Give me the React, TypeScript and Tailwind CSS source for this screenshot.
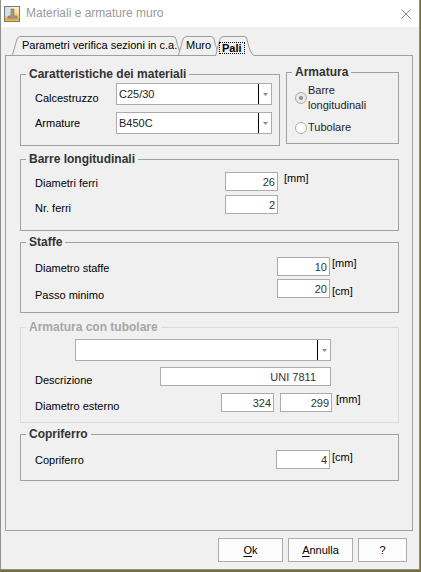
import React from "react";

const FONT = "font-['Liberation_Sans',Arial,sans-serif]";

function Legend({ children, disabled }: { children: React.ReactNode; disabled?: boolean }) {
  return (
    <legend
      className={`ml-[5px] whitespace-nowrap px-[3px] text-[12px] font-bold leading-[15px] ${
        disabled ? "text-[#a6a6a6]" : "text-[#333333]"
      }`}
    >
      {children}
    </legend>
  );
}

function Label({ children, className }: { children: React.ReactNode; className: string }) {
  return <div className={`shrink-0 whitespace-nowrap leading-[15px] text-black ${className}`}>{children}</div>;
}

function NumBox({ value, className }: { value: string; className: string }) {
  return (
    <div
      className={`h-[19px] shrink-0 border border-[#ababab] bg-white text-right leading-[18px] text-[#333333] ${className}`}
    >
      {value}
    </div>
  );
}

function Unit({ children, className }: { children: React.ReactNode; className: string }) {
  return <div className={`whitespace-nowrap leading-[15px] text-black ${className}`}>{children}</div>;
}

function Combo({ value, className }: { value: string; className: string }) {
  return (
    <div className={`flex h-[22px] shrink-0 border border-[#ababab] bg-white ${className}`}>
      <div className="flex-1 pl-[2px] pt-[3px] leading-[15px] text-[#222222]">{value}</div>
      <div className="flex w-[13px] items-center justify-center border-l border-black">
        <svg width="5" height="3" viewBox="0 0 5 3">
          <path d="M0 0H5L2.5 3Z" fill="#8a8a8a" />
        </svg>
      </div>
    </div>
  );
}

function Radio({ checked }: { checked?: boolean }) {
  return (
    <span
      className={`flex h-[12px] w-[12px] shrink-0 items-center justify-center rounded-full border border-[#adadad] ${
        checked ? "bg-[#e8e8e8]" : "bg-white"
      }`}
    >
      {checked && <span className="h-[4px] w-[4px] rounded-full bg-[#8c8c8c]" />}
    </span>
  );
}

function Tab({
  width,
  height,
  className,
  children,
  selected,
}: {
  width: number;
  height: number;
  className: string;
  children: React.ReactNode;
  selected?: boolean;
}) {
  const W = width;
  const H = height;
  const d = `M0.5 ${H} L5 3 Q6 0.5 9 0.5 L${W - 11} 0.5 Q${W - 8.5} 0.5 ${W - 8} 3 Q${W - 5} ${H - 1} ${W} ${H}`;
  return (
    <div className={`relative shrink-0 ${selected ? "z-20" : "z-10"} ${className}`}>
      <svg className="absolute left-0 top-0" width={W} height={H} viewBox={`0 0 ${W} ${H}`}>
        <path d={d} fill="#f0f0f0" stroke="#9c9c9c" strokeWidth="1" />
      </svg>
      <div className="relative whitespace-nowrap">{children}</div>
    </div>
  );
}

function TitleIcon() {
  return (
    <svg width="16" height="16" viewBox="0 0 16 16">
      <defs>
        <linearGradient id="ti" x1="0" y1="0" x2="0" y2="1">
          <stop offset="0" stopColor="#fdf6cf" />
          <stop offset="1" stopColor="#f1b748" />
        </linearGradient>
      </defs>
      <rect x="0.5" y="0.5" width="15" height="15" fill="url(#ti)" stroke="#7d7c74" />
      <rect x="1" y="1" width="5" height="9" fill="#cfe0ee" />
      <path d="M7 3H10V10H13V12H4V10H7Z" fill="#9a9a9a" stroke="#6e6e6e" strokeWidth="0.6" />
      <path d="M1 13H15" stroke="#c98a2c" />
    </svg>
  );
}

export default function App() {
  return (
    <div className={`h-[572px] w-[421px] bg-[#7a6a33] text-[11px] ${FONT}`}>
      <div className="flex h-[570px] w-[420px] flex-col border-x border-b border-[#8f8f8f] bg-[#f0f0f0]">
        {/* title bar */}
        <div className="flex h-[27px] shrink-0 items-center bg-white">
          <div className="ml-[3px]">
            <TitleIcon />
          </div>
          <div className="ml-[6px] flex-1 text-[12px] leading-[15px] text-[#9a9a9a]">Materiali e armature muro</div>
          <svg className="mr-[8px]" width="10" height="10" viewBox="0 0 10 10">
            <path d="M0.5 0.5L9.5 9.5M9.5 0.5L0.5 9.5" stroke="#8a8a8a" strokeWidth="1" />
          </svg>
        </div>

        {/* body */}
        <div className="flex flex-1 flex-col pl-[4px] pr-[6px] pt-[9px]">
          {/* tab strip */}
          <div className="flex h-[19px] pl-[7px]">
            <Tab width={172} height={19} className="w-[172px]">
              <div className="pl-[10px] pt-[2px] leading-[15px] text-black">Parametri verifica sezioni in c.a.</div>
            </Tab>
            <Tab width={44} height={19} className="-ml-[6px] w-[44px]">
              <div className="pl-[8px] pt-[2px] leading-[15px] text-black">Muro</div>
            </Tab>
            <Tab width={40} height={20} className="-ml-[7px] w-[40px]" selected>
              <div className="pl-[4px] pt-[4px]">
                <span className="inline-block border border-dotted border-black px-[2px] font-bold leading-[10px] text-black">
                  Pali
                </span>
              </div>
            </Tab>
          </div>

          {/* tab page */}
          <div className="h-[476px] border border-[#a0a0a0] pl-[14px] pt-[9px]">
            <div className="flex items-start">
              <fieldset className="mt-[2px] h-[79px] w-[260px] min-w-0 border border-[#a0a0a0]">
                <Legend>Caratteristiche dei materiali</Legend>
                <div className="mt-[1px] flex items-start pl-[14px]">
                  <Label className="mt-[8px] w-[81px]">Calcestruzzo</Label>
                  <Combo value="C25/30" className="w-[156px]" />
                </div>
                <div className="mt-[6px] flex items-start pl-[14px]">
                  <Label className="mt-[4px] w-[81px]">Armature</Label>
                  <Combo value="B450C" className="w-[156px]" />
                </div>
              </fieldset>

              <fieldset className="ml-[6px] h-[79px] w-[113px] min-w-0 border border-[#a0a0a0]">
                <Legend>Armatura</Legend>
                <div className="mt-[3px] flex items-start pl-[8px]">
                  <div className="mt-[9px]">
                    <Radio checked />
                  </div>
                  <div className="ml-[1px] leading-[15px] text-[#222222]">
                    Barre
                    <br />
                    longitudinali
                  </div>
                </div>
                <div className="mt-[7px] flex items-start pl-[8px]">
                  <div className="mt-[2px]">
                    <Radio />
                  </div>
                  <div className="ml-[1px] leading-[15px] text-[#222222]">Tubolare</div>
                </div>
              </fieldset>
            </div>

            <fieldset className="mt-[6px] h-[79px] w-[379px] min-w-0 border border-[#a0a0a0]">
              <Legend>Barre longitudinali</Legend>
              <div className="mt-[5px] flex items-start pl-[14px]">
                <Label className="mt-[4px] w-[190px]">Diametri ferri</Label>
                <NumBox value="26" className="w-[53px] pr-[2px]" />
                <Unit className="-mt-[1px] ml-[6px]">[mm]</Unit>
              </div>
              <div className="mt-[4px] flex items-start pl-[14px]">
                <Label className="mt-[6px] w-[190px]">Nr. ferri</Label>
                <NumBox value="2" className="w-[53px] pr-[2px]" />
              </div>
            </fieldset>

            <fieldset className="mt-[4px] h-[78px] w-[379px] min-w-0 border border-[#a0a0a0]">
              <Legend>Staffe</Legend>
              <div className="mt-[7px] flex items-start pl-[14px]">
                <Label className="mt-[4px] w-[242px]">Diametro staffe</Label>
                <NumBox value="10" className="w-[53px] pr-[2px]" />
                <Unit className="-mt-[1px] ml-[2px]">[mm]</Unit>
              </div>
              <div className="mt-[3px] flex items-start pl-[14px]">
                <Label className="mt-[9px] w-[242px]">Passo minimo</Label>
                <NumBox value="20" className="w-[53px] pr-[2px]" />
                <Unit className="mt-[5px] ml-[2px]">[cm]</Unit>
              </div>
            </fieldset>

            <fieldset className="mt-[7px] h-[103px] w-[379px] min-w-0 border border-[#dadada]">
              <Legend disabled>Armatura con tubolare</Legend>
              <div className="mt-[4px] flex pl-[54px]">
                <Combo value="" className="w-[256px]" />
              </div>
              <div className="mt-[6px] flex items-start pl-[14px]">
                <Label className="mt-[6px] w-[125px]">Descrizione</Label>
                <NumBox value="UNI 7811" className="w-[171px] pr-[14px]" />
              </div>
              <div className="mt-[5px] flex items-start pl-[14px]">
                <Label className="mt-[6px] w-[186px]">Diametro esterno</Label>
                <NumBox value="324" className="w-[53px] pr-[2px]" />
                <NumBox value="299" className="ml-[6px] w-[52px] pr-[2px]" />
                <Unit className="-mt-[1px] ml-[4px]">[mm]</Unit>
              </div>
            </fieldset>

            <fieldset className="mt-[4px] h-[54px] w-[379px] min-w-0 border border-[#a0a0a0]">
              <Legend>Copriferro</Legend>
              <div className="mt-[8px] flex items-start pl-[14px]">
                <Label className="mt-[3px] w-[241px]">Copriferro</Label>
                <NumBox value="4" className="w-[54px] pr-[2px]" />
                <Unit className="ml-[2px]">[cm]</Unit>
              </div>
            </fieldset>
          </div>

          {/* dialog buttons */}
          <div className="mt-[7px] flex justify-end gap-[5px] pr-[6px]">
            <button className="h-[24px] w-[65px] border border-[#adadad] bg-[#fcfcfc] leading-[15px] text-black">
              <span className="underline underline-offset-[2px]">O</span>k
            </button>
            <button className="h-[24px] w-[65px] border border-[#adadad] bg-[#fcfcfc] leading-[15px] text-black">
              <span className="underline underline-offset-[2px]">A</span>nnulla
            </button>
            <button className="h-[24px] w-[49px] border border-[#adadad] bg-[#fcfcfc] leading-[15px] text-black">
              ?
            </button>
          </div>
        </div>
      </div>
    </div>
  );
}
